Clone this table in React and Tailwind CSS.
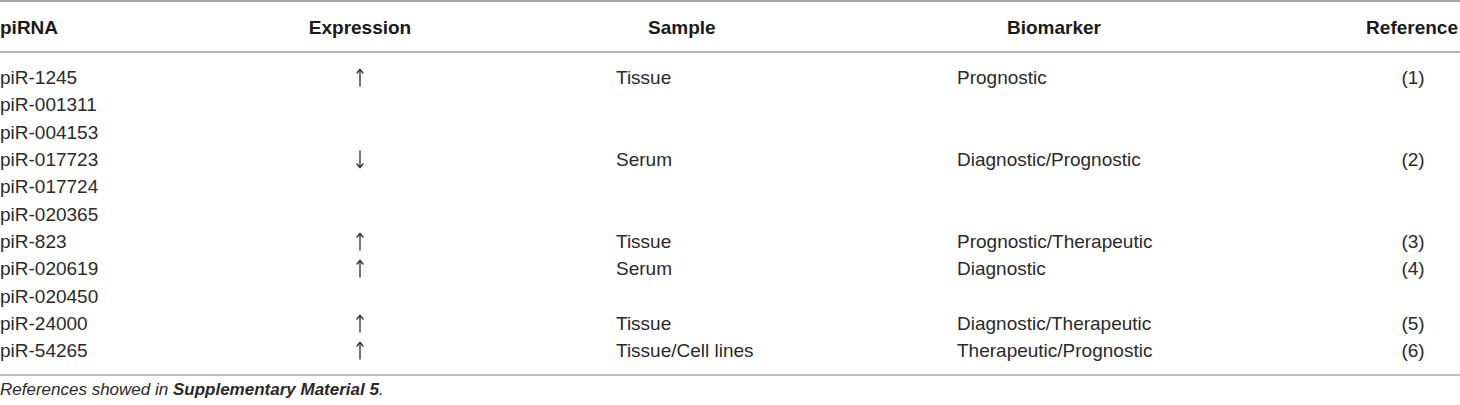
import React from "react";

const rows = [
  ["piR-1245", "up", "Tissue", "Prognostic", "(1)"],
  ["piR-001311", "", "", "", ""],
  ["piR-004153", "", "", "", ""],
  ["piR-017723", "down", "Serum", "Diagnostic/Prognostic", "(2)"],
  ["piR-017724", "", "", "", ""],
  ["piR-020365", "", "", "", ""],
  ["piR-823", "up", "Tissue", "Prognostic/Therapeutic", "(3)"],
  ["piR-020619", "up", "Serum", "Diagnostic", "(4)"],
  ["piR-020450", "", "", "", ""],
  ["piR-24000", "up", "Tissue", "Diagnostic/Therapeutic", "(5)"],
  ["piR-54265", "up", "Tissue/Cell lines", "Therapeutic/Prognostic", "(6)"],
];

const cols = "grid grid-cols-[300px_120px_537px_409px_94px]";

function Arrow({ dir }) {
  if (!dir) return null;
  return (
    <svg width="10" height="19" viewBox="0 0 10 19" className="block">
      <g
        transform={dir === "down" ? "rotate(180 5 9.5)" : undefined}
        fill="none"
        stroke="#2a2a2a"
        strokeWidth="1.3"
        strokeLinecap="round"
        strokeLinejoin="round"
      >
        <path d="M5 1.5 V18" />
        <path d="M2 5 L5 1.5 L8 5" />
      </g>
    </svg>
  );
}

export default function App() {
  return (
    <div
      className="w-[1460px] h-[405px] bg-white text-[#2a2a2a] overflow-hidden"
      style={{ fontFamily: '"Liberation Sans", Arial, sans-serif' }}
    >
      <div className="border-t-2 border-[#a6a6a6]" />
      <div className={`${cols} h-[49px] pt-[3px] items-center font-bold text-[19px] text-[#1a1a1a]`}>
        <div>piRNA</div>
        <div className="text-center">Expression</div>
        <div className="pl-[228px]">Sample</div>
        <div className="pl-[50px]">Biomarker</div>
        <div className="flex justify-end pr-[2px] whitespace-nowrap">Reference</div>
      </div>
      <div className="border-t-2 border-[#b4b4b4]" />
      <div className="pt-[11px] pb-[10px] text-[19px]">
        {rows.map((r, i) => (
          <div key={i} className={`${cols} h-[27.3px] items-center leading-none`}>
            <div>{r[0]}</div>
            <div className="flex justify-center">
              <Arrow dir={r[1]} />
            </div>
            <div className="pl-[196px]">{r[2]}</div>
            <div>{r[3]}</div>
            <div className="text-center">{r[4]}</div>
          </div>
        ))}
      </div>
      <div className="border-t-2 border-[#bdbdbd]" />
      <div className="h-[27px] flex items-center italic text-[17px] text-[#2a2a2a]">
        <span>
          References showed in <b className="font-bold">Supplementary Material 5</b>.
        </span>
      </div>
    </div>
  );
}
